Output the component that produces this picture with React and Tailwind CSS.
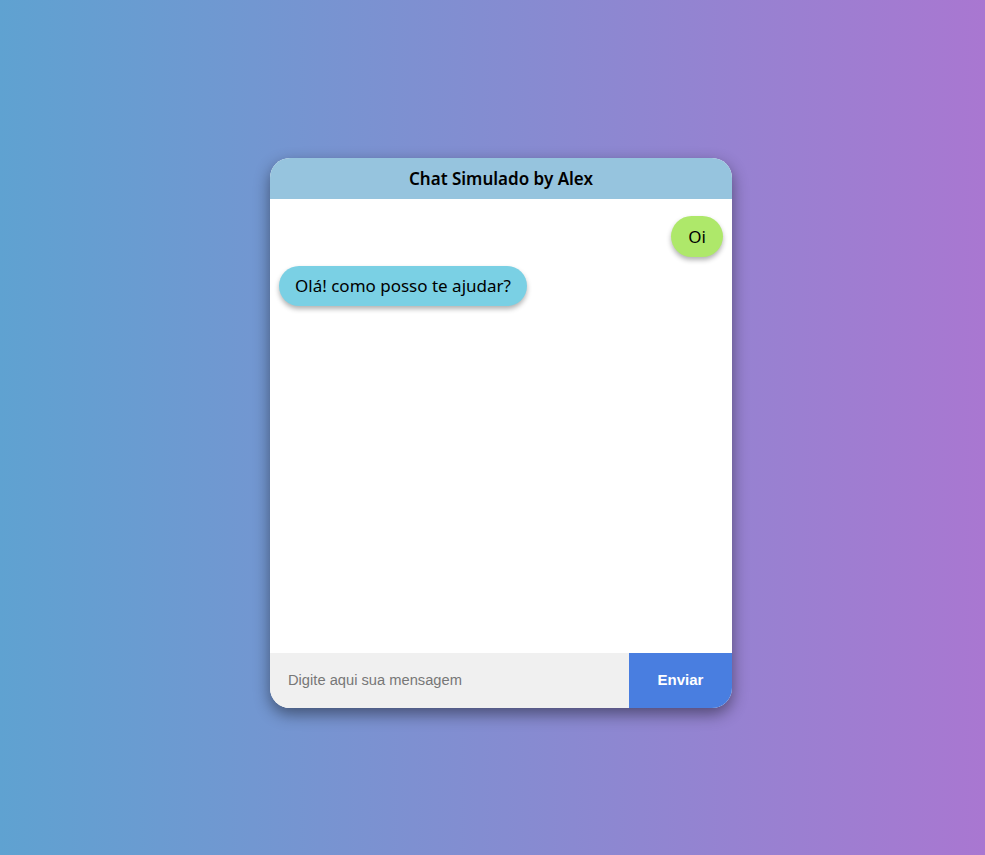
export default function App() {
  return (
    <div className="w-full h-[855px] flex items-center justify-center pl-[17px] pt-[11px] bg-[linear-gradient(to_right,#5fa2d1,#a977d1)]" style={{fontFamily: '"Open Sans", sans-serif'}}>
      <div className="w-[462px] h-[550px] rounded-[20px] overflow-hidden bg-white flex flex-col shadow-[0_6px_16px_rgba(0,0,0,0.45)]">
        <div className="h-[41px] shrink-0 bg-[#96c4de] flex items-center justify-center">
          <span className="text-[17px] font-semibold text-black" style={{fontFamily: '"Noto Sans", sans-serif'}}>Chat Simulado by Alex</span>
        </div>
        <div className="flex-1 flex flex-col gap-[9px] px-[9px] pt-[17px]" style={{fontFamily: '"Noto Sans", sans-serif'}}>
          <div className="self-end h-[41px] px-[17px] flex items-center rounded-full bg-[#aee86a] text-[17px] text-black shadow-[0_3px_5px_rgba(0,0,0,0.3)]">Oi</div>
          <div className="self-start h-[40px] px-[16px] flex items-center rounded-full bg-[#7ad0e4] text-[17px] text-black shadow-[0_3px_5px_rgba(0,0,0,0.3)]">Olá! como posso te ajudar?</div>
        </div>
        <div className="h-[55px] shrink-0 flex">
          <input autoFocus className="flex-1 min-w-0 bg-[#f0f0f0] pl-[18px] text-[14.7px] outline-none text-black placeholder:text-[#777]" style={{fontFamily: '"Liberation Sans", Arial, sans-serif'}} placeholder="Digite aqui sua mensagem" />
          <button className="w-[103px] bg-[#497ee0] text-white font-bold text-[15px]" style={{fontFamily: '"Liberation Sans", Arial, sans-serif'}}>Enviar</button>
        </div>
      </div>
    </div>
  );
}
